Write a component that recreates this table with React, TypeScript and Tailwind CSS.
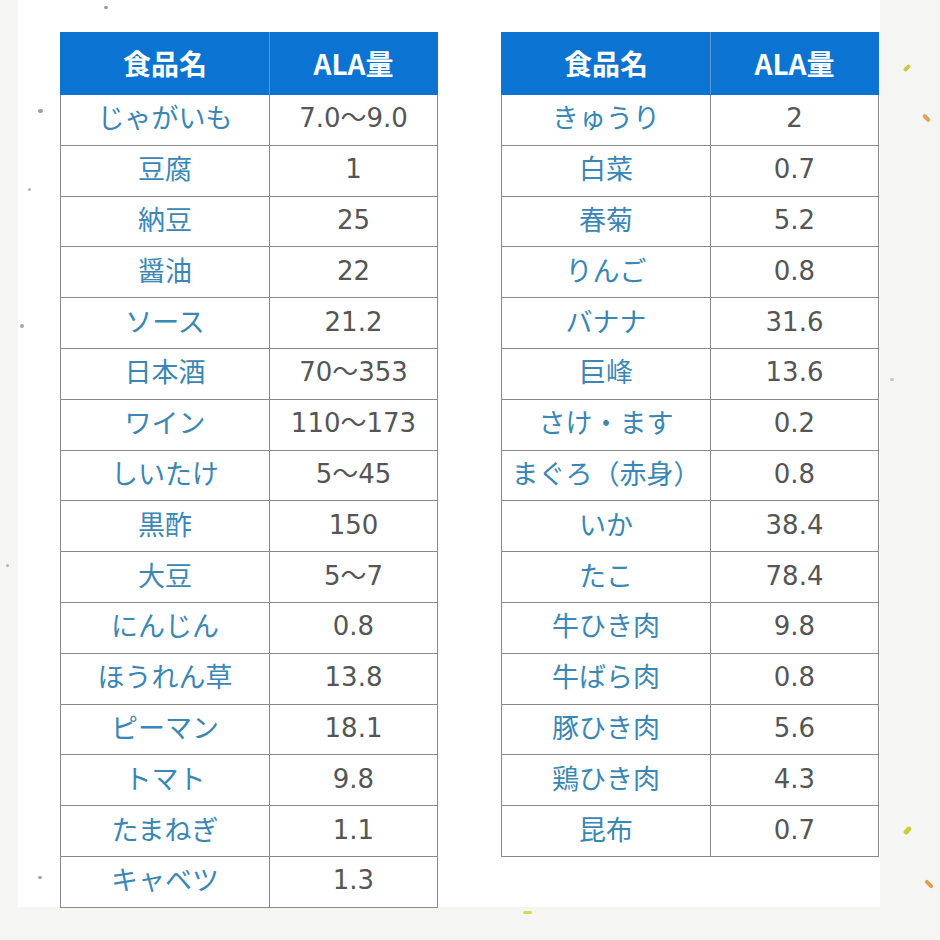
import React from 'react';

const LEFT: [string, string][] = [
  ['じゃがいも', '7.0〜9.0'],
  ['豆腐', '1'],
  ['納豆', '25'],
  ['醤油', '22'],
  ['ソース', '21.2'],
  ['日本酒', '70〜353'],
  ['ワイン', '110〜173'],
  ['しいたけ', '5〜45'],
  ['黒酢', '150'],
  ['大豆', '5〜7'],
  ['にんじん', '0.8'],
  ['ほうれん草', '13.8'],
  ['ピーマン', '18.1'],
  ['トマト', '9.8'],
  ['たまねぎ', '1.1'],
  ['キャベツ', '1.3'],
];

const RIGHT: [string, string][] = [
  ['きゅうり', '2'],
  ['白菜', '0.7'],
  ['春菊', '5.2'],
  ['りんご', '0.8'],
  ['バナナ', '31.6'],
  ['巨峰', '13.6'],
  ['さけ・ます', '0.2'],
  ['まぐろ（赤身）', '0.8'],
  ['いか', '38.4'],
  ['たこ', '78.4'],
  ['牛ひき肉', '9.8'],
  ['牛ばら肉', '0.8'],
  ['豚ひき肉', '5.6'],
  ['鶏ひき肉', '4.3'],
  ['昆布', '0.7'],
];

const SPECKS = [
  { x: 104, y: 6, c: 'bg-[#9a9a9a]', w: 'w-[4px] h-[3px]' },
  { x: 38, y: 109, c: 'bg-[#a0a0a0]', w: 'w-[5px] h-[4px]' },
  { x: 28, y: 188, c: 'bg-[#b0b0b0]', w: 'w-[3px] h-[3px]' },
  { x: 20, y: 324, c: 'bg-[#a5a5a5]', w: 'w-[4px] h-[4px]' },
  { x: 38, y: 876, c: 'bg-[#a0a0a0]', w: 'w-[4px] h-[3px]' },
  { x: 903, y: 66, c: 'bg-[#c9c94a]', w: 'w-[8px] h-[4px] -rotate-45' },
  { x: 922, y: 116, c: 'bg-[#e0a45a]', w: 'w-[9px] h-[4px] rotate-45' },
  { x: 890, y: 378, c: 'bg-[#c8c8c8]', w: 'w-[4px] h-[3px]' },
  { x: 903, y: 828, c: 'bg-[#c6cc3c]', w: 'w-[9px] h-[5px] -rotate-45' },
  { x: 924, y: 882, c: 'bg-[#e0a050]', w: 'w-[10px] h-[4px] rotate-45' },
  { x: 523, y: 911, c: 'bg-[#d6d850]', w: 'w-[9px] h-[3px]' },
  { x: 6, y: 564, c: 'bg-[#b5b5b5]', w: 'w-[3px] h-[3px]' },
];

// Meiryo-ish digits: a wide Verdana-like face for numbers, CJK falls through
const NUM_FONT = '"DejaVu Sans", "Noto Sans CJK JP", sans-serif';

function AlaTable({ rows }: { rows: [string, string][] }) {
  return (
    <table className="w-[377px] border-collapse table-fixed leading-none">
      <colgroup>
        <col className="w-[209px]" />
        <col className="w-[168px]" />
      </colgroup>
      <thead>
        <tr className="h-[62px] bg-[#0b73d2] text-white text-[28px]">
          <th className="border border-[#0b73d2] border-r-[#5a9ad8] font-bold pb-[2px]">食品名</th>
          <th className="border border-[#0b73d2] font-bold pb-[2px]">ALA量</th>
        </tr>
      </thead>
      <tbody>
        {rows.map(([name, val]) => (
          <tr key={name} className="h-[50.8px] bg-white">
            <td className="border border-[#8a8a8a] text-center text-[#3a86b4] text-[27px] whitespace-nowrap px-0 pb-[6px]">
              {name}
            </td>
            <td
              className="border border-[#8a8a8a] text-center text-[#555555] text-[26px] pb-[3px]"
              style={{ fontFamily: NUM_FONT }}
            >
              {val}
            </td>
          </tr>
        ))}
      </tbody>
    </table>
  );
}

export default function App() {
  return (
    <div
      className="relative w-[940px] h-[940px] overflow-hidden bg-[#f5f5f4]"
      style={{ fontFamily: '"Noto Sans CJK JP", "Noto Sans", sans-serif' }}
    >
      <div className="ml-[18px] w-[862px] h-[907px] bg-white pt-[32px] pl-[42px] flex items-start gap-[63px]">
        <AlaTable rows={LEFT} />
        <AlaTable rows={RIGHT} />
      </div>
      {SPECKS.map((s, i) => (
        <span
          key={i}
          className={`absolute rounded-full ${s.c} ${s.w}`}
          style={{ left: s.x, top: s.y }}
        />
      ))}
    </div>
  );
}
